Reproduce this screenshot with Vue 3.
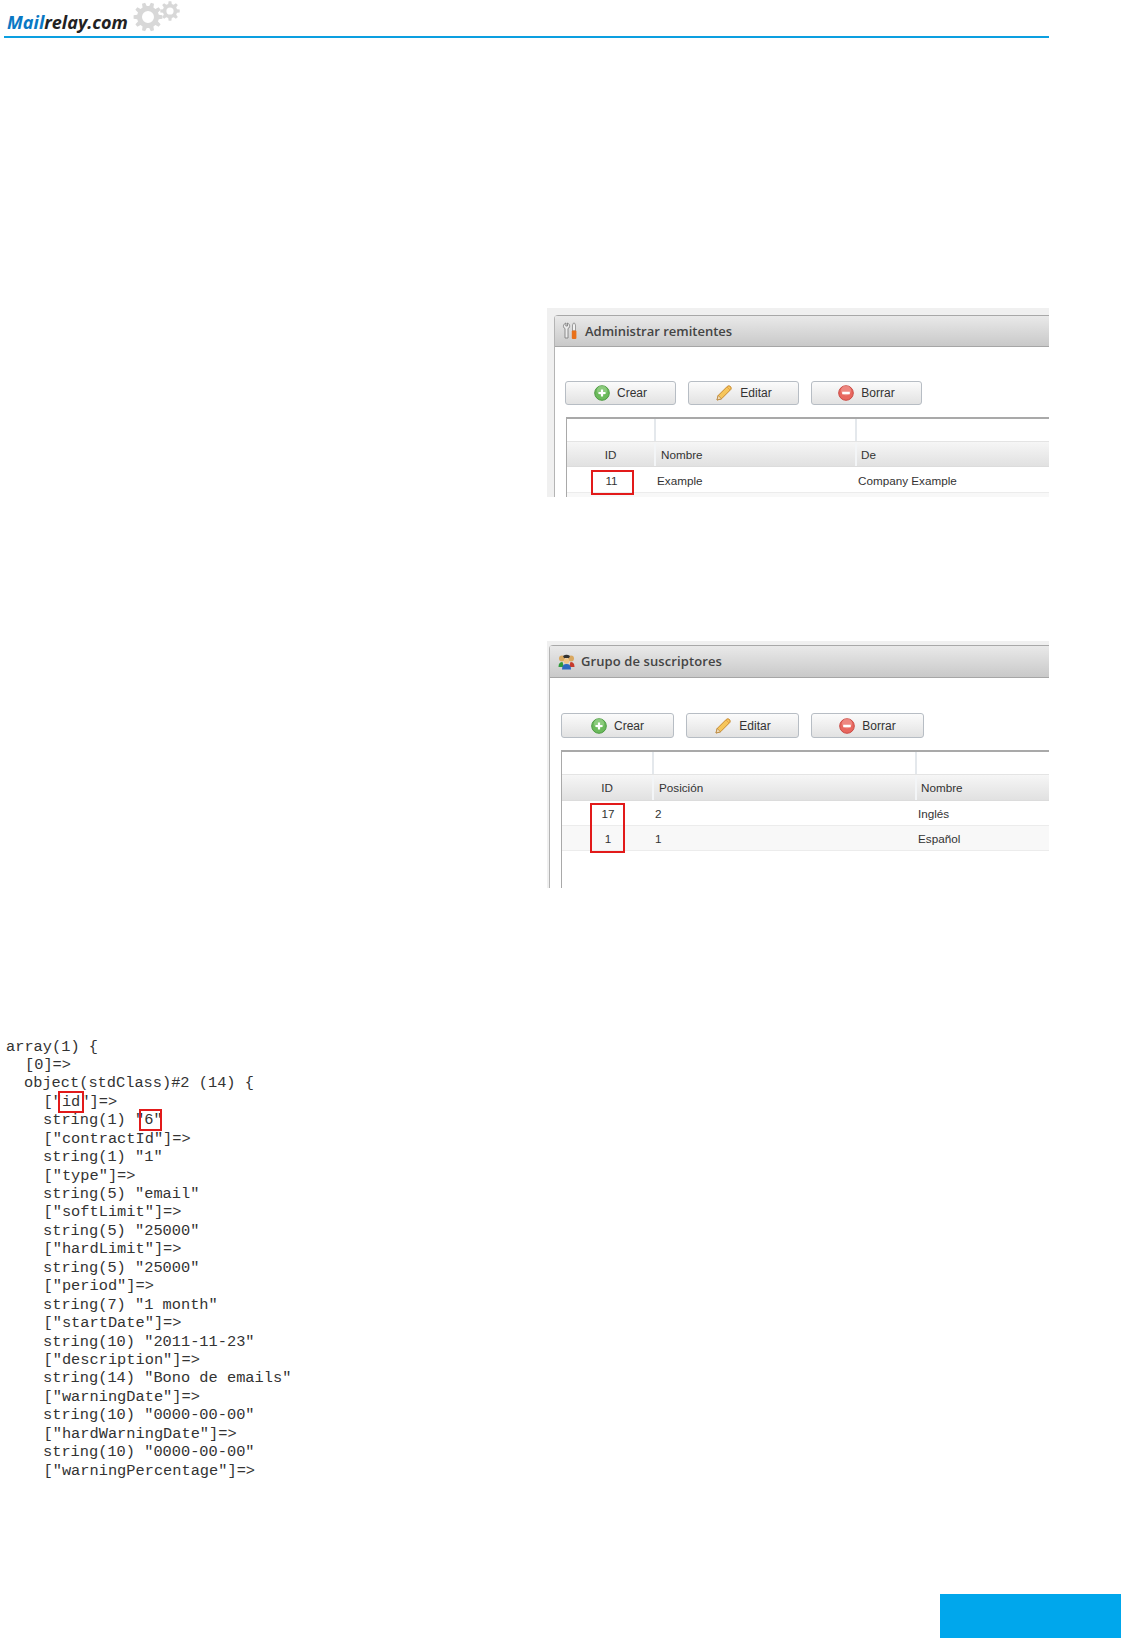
<script setup>
function gear(cx, cy, R, r, hole, teeth) {
  let d = ''
  const step = (Math.PI * 2) / teeth
  for (let i = 0; i < teeth; i++) {
    const a = i * step
    const pts = [
      [r, a - step * 0.32], [R, a - step * 0.18], [R, a + step * 0.18], [r, a + step * 0.32]
    ]
    pts.forEach(([rad, t], j) => {
      const x = (cx + rad * Math.cos(t)).toFixed(2)
      const y = (cy + rad * Math.sin(t)).toFixed(2)
      d += `${i === 0 && j === 0 ? 'M' : 'L'}${x} ${y} `
    })
  }
  d += `Z M${cx + hole} ${cy} A${hole} ${hole} 0 1 0 ${cx - hole} ${cy} A${hole} ${hole} 0 1 0 ${cx + hole} ${cy} Z`
  return d
}
const bigGear = gear(15, 16, 14.5, 11, 6, 10)
const smallGear = gear(37, 10, 9.8, 7.2, 3.6, 8)

const panels = [
  {
    key: 'a', title: 'Administrar remitentes', icon: 'tools',
    headers: ['ID', 'Nombre', 'De'],
    rows: [['11', 'Example', 'Company Example'], ['', '', '']]
  },
  {
    key: 'b', title: 'Grupo de suscriptores', icon: 'people',
    headers: ['ID', 'Posición', 'Nombre'],
    rows: [['17', '2', 'Inglés'], ['1', '1', 'Español']]
  }
]

const code = [
  [0, 'array(1) {'], [2, '[0]=>'], [1, 'object(stdClass)#2 (14) {'],
  [3, '["id"]=>'], [4, 'string(1) "6"'],
  [3, '["contractId"]=>'], [4, 'string(1) "1"'],
  [3, '["type"]=>'], [4, 'string(5) "email"'],
  [3, '["softLimit"]=>'], [4, 'string(5) "25000"'],
  [3, '["hardLimit"]=>'], [4, 'string(5) "25000"'],
  [3, '["period"]=>'], [4, 'string(7) "1 month"'],
  [3, '["startDate"]=>'], [4, 'string(10) "2011-11-23"'],
  [3, '["description"]=>'], [4, 'string(14) "Bono de emails"'],
  [3, '["warningDate"]=>'], [4, 'string(10) "0000-00-00"'],
  [3, '["hardWarningDate"]=>'], [4, 'string(10) "0000-00-00"'],
  [3, '["warningPercentage"]=>']
]
</script>

<template>
  <div class="page">
    <header class="head">
      <span class="logo"><span class="mail">Mail</span>relay.com</span>
      <svg class="gears" width="50" height="34" viewBox="0 0 50 34">
        <path :d="bigGear" fill="#d8d8d8" fill-rule="evenodd" />
        <path :d="smallGear" fill="#d8d8d8" fill-rule="evenodd" />
      </svg>
    </header>

    <section v-for="p in panels" :key="p.key" class="shot" :class="'shot-' + p.key">
      <div class="panel">
        <div class="title">
          <svg v-if="p.icon === 'tools'" class="t-icon" width="16" height="18" viewBox="0 0 16 18">
            <path d="M4 1 C1 2 0.5 5.5 3 6.5 L3 16 L6 16 L6 6.5 C8.5 5.5 8 2 5.5 1 L5.5 4 L3.8 4 Z" fill="#ececec" stroke="#777" stroke-width="0.8" />
            <path d="M10.5 9 L10.5 3 L11.5 1 L12.5 1 L13.5 3 L13.5 9 Z" fill="#f2f2f2" stroke="#888" stroke-width="0.8" />
            <rect x="9.8" y="8.5" width="4.6" height="8.5" rx="1" fill="#e8701a" />
          </svg>
          <svg v-else class="t-icon" width="17" height="16" viewBox="0 0 17 16">
            <circle cx="4" cy="4.5" r="3" fill="#d9a860" />
            <circle cx="13" cy="4.5" r="3" fill="#d9a860" />
            <path d="M5 2 Q8.5 -0.5 12 2 L11 4 L6 4 Z" fill="#333" />
            <path d="M0.5 13 Q0.5 8 4.5 8 L6 13 Z" fill="#2f9a3c" />
            <path d="M16.5 13 Q16.5 8 12.5 8 L11 13 Z" fill="#c73a2c" />
            <circle cx="8.5" cy="7" r="2.8" fill="#f0c587" />
            <path d="M4 15.5 Q4 10 8.5 10 Q13 10 13 15.5 Z" fill="#2c68c0" />
          </svg>
          <span>{{ p.title }}</span>
        </div>
        <div class="body">
          <div class="btns">
            <button class="btn">
              <svg width="16" height="16" viewBox="0 0 16 16">
                <circle cx="8" cy="8" r="7.3" fill="#6cba5c" stroke="#4d9a42" />
                <circle cx="8" cy="5.5" r="5" fill="#a9dc9c" opacity="0.5" />
                <path d="M8 4.5V11.5M4.5 8H11.5" stroke="#fff" stroke-width="2.2" />
              </svg>
              Crear
            </button>
            <button class="btn">
              <svg width="18" height="18" viewBox="0 0 18 18">
                <path d="M2 16 L3.2 11.5 L12.5 2.2 Q14 1.2 15.5 2.5 Q16.8 4 15.8 5.5 L6.5 14.8 Z" fill="#f6c65b" stroke="#c8892e" stroke-width="1" />
                <path d="M2 16 L3.2 11.5 L6.5 14.8 Z" fill="#f3dfbd" stroke="#a8742a" stroke-width="0.6" />
                <path d="M12 3 L15 6" stroke="#e5a24a" stroke-width="1" />
              </svg>
              Editar
            </button>
            <button class="btn">
              <svg width="16" height="16" viewBox="0 0 16 16">
                <circle cx="8" cy="8" r="7.3" fill="#e8675f" stroke="#c94a44" />
                <circle cx="8" cy="5.5" r="5" fill="#f4a8a2" opacity="0.5" />
                <path d="M4.2 8H11.8" stroke="#fff" stroke-width="2.4" />
              </svg>
              Borrar
            </button>
          </div>
          <div class="grid">
            <div class="row blank">
              <div class="cell"></div><div class="cell"></div><div class="cell"></div>
            </div>
            <div class="row hrow">
              <div class="cell ctr">{{ p.headers[0] }}</div>
              <div class="cell hc">{{ p.headers[1] }}</div>
              <div class="cell hc3">{{ p.headers[2] }}</div>
            </div>
            <div v-for="(r, i) in p.rows" :key="i" class="row drow" :class="{ alt: i % 2 }">
              <div class="cell ctr">{{ r[0] }}</div>
              <div class="cell dc">{{ r[1] }}</div>
              <div class="cell dc">{{ r[2] }}</div>
            </div>
            <div class="mark"></div>
          </div>
        </div>
      </div>
    </section>

    <div class="code">
      <div v-for="(l, i) in code" :key="i" class="line" :class="'ind-' + l[0]">{{ l[1] }}</div>
      <div class="box box-id"></div>
      <div class="box box-val"></div>
    </div>

    <div class="foot"></div>
  </div>
</template>

<style scoped>
.page {
  width: 1121px;
  height: 1638px;
  overflow: hidden;
  background: #fff;
}
.head {
  width: 1045px;
  height: 36px;
  margin-left: 4px;
  border-bottom: 2px solid #0c9fe0;
  display: flex;
  align-items: flex-start;
}
.logo {
  margin: 10px 0 0 3px;
  font: italic 700 18px/24px "Open Sans", sans-serif;
  color: #222;
}
.mail { color: #0a78c4; }
.gears { margin: 1px 0 0 5px; }

.shot {
  width: 502px;
  margin-left: 547px;
  background: #f0f0f0;
  box-sizing: border-box;
  overflow: hidden;
}
.shot-a { margin-top: 270px; height: 189px; padding: 7px 0 0 7px; }
.shot-b { margin-top: 144px; height: 247px; padding: 4px 0 0 2px; }
.panel {
  height: 100%;
  background: #fff;
  border-left: 1px solid #b4b4b4;
  border-top-left-radius: 4px;
  overflow: hidden;
}
.title {
  display: flex;
  align-items: center;
  height: 32px;
  box-sizing: border-box;
  gap: 7px;
  padding-left: 7px;
  border-top: 1px solid #a8a8a8;
  border-bottom: 1px solid #a6a6a6;
  background: linear-gradient(#e9e9e9, #c9c9c9);
  font: 600 13px/1 "Open Sans", sans-serif;
  color: #444;
}
.shot-b .title { padding: 0 0 0 8px; height: 33px; gap: 6px; letter-spacing: 0.1px; }
.body { padding-left: 10px; }
.shot-a .body { padding-top: 34px; }
.shot-b .body { padding-left: 11px; padding-top: 35px; }
.btns { display: flex; gap: 12px; }
.btn {
  width: 111px;
  height: 24px;
  padding: 0;
  display: flex;
  align-items: center;
  justify-content: center;
  gap: 7px;
  box-sizing: border-box;
  border: 1px solid #b7bdc4;
  border-radius: 3px;
  background: linear-gradient(#fbfbfb, #e2e2e2);
  font: 12px/1 "Liberation Sans", sans-serif;
  color: #333;
}
.shot-b .btn { width: 113px; height: 25px; }
.grid {
  position: relative;
  margin: 12px 0 0 1px;
  border-top: 2px solid #a9a9a9;
  border-left: 1px solid #a9a9a9;
  height: 300px;
  box-sizing: border-box;
  font: 11.7px/1 "Liberation Sans", sans-serif;
  color: #333;
}
.shot-b .grid { margin-left: 0; }
.row { display: grid; }
.shot-a .row { grid-template-columns: 89px 201px 1fr; }
.shot-b .row { grid-template-columns: 92px 263px 1fr; }
.cell {
  display: flex;
  align-items: center;
  box-sizing: border-box;
}
.blank { height: 22px; }
.blank .cell { border-right: 2px solid #e4e8ec; }
.blank .cell:last-child { border-right: 0; }
.hrow {
  height: 26px;
  padding-top: 1px;
  background: linear-gradient(#f6f6f6, #e1e1e1);
  border-top: 1px solid #e4e4e4;
  border-bottom: 1px solid #dcdcdc;
  box-sizing: border-box;
}
.shot-b .hrow { height: 27px; }
.hrow .cell { border-right: 2px solid #f3f5f7; }
.hrow .cell:last-child { border-right: 0; }
.ctr { justify-content: center; }
.hc { padding-left: 5px; }
.hc3 { padding-left: 4px; }
.drow { height: 26px; padding-top: 3px; border-bottom: 1px solid #ececec; box-sizing: border-box; }
.shot-b .drow { height: 25px; padding-top: 1px; }
.alt { background: #f8f8f8; }
.dc { padding-left: 1px; }
.mark {
  position: absolute;
  border: 2px solid #e21a1a;
  box-sizing: border-box;
}
.shot-a .mark { left: 24px; top: 51px; width: 43px; height: 25px; }
.shot-b .mark { left: 28px; top: 51px; width: 35px; height: 50px; }

.code {
  position: relative;
  box-sizing: border-box;
  margin-top: 149px;
  padding-top: 0.5px;
  height: 442px;
  font: 15.33px/18.43px "Liberation Mono", monospace;
  color: #333;
}
.line { white-space: pre; }
.ind-0 { padding-left: 6px; }
.ind-1 { padding-left: 24px; }
.ind-2 { padding-left: 25px; }
.ind-3 { padding-left: 43.5px; }
.ind-4 { padding-left: 43px; }
.box {
  position: absolute;
  border: 2px solid #e21a1a;
  box-sizing: border-box;
}
.box-id { left: 58px; top: 54px; width: 26px; height: 22px; }
.box-val { left: 139px; top: 72px; width: 23px; height: 22px; }
.foot {
  width: 181px;
  height: 44px;
  margin: 115px 0 0 940px;
  background: #00a7ec;
}
</style>
